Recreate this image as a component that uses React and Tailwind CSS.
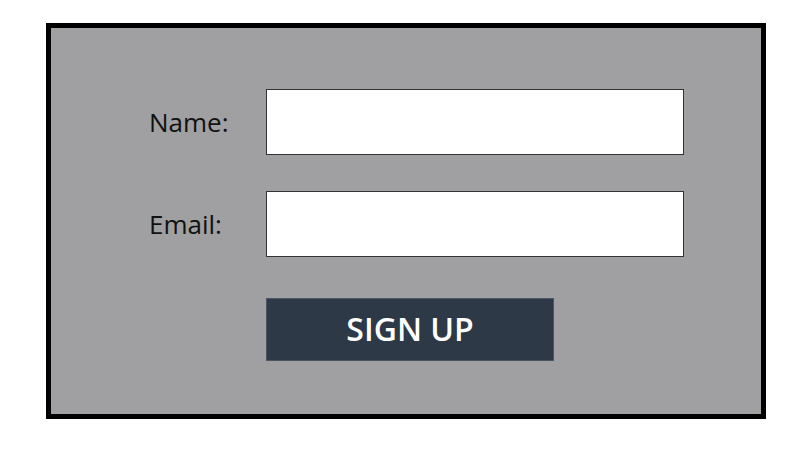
export default function App() {
  return (
    <div className="min-h-[451px] w-[801px] bg-white pl-[46px] pt-[23px]" style={{ fontFamily: '"Open Sans", "Noto Sans", sans-serif' }}>
      <div className="h-[396px] w-[720px] border-[5px] border-black bg-[#a0a0a3] pl-[98px] pt-[61px]">
        <div className="grid grid-cols-[117px_418px] items-center">
          <label className="text-[26px] leading-none text-[#111]">Name:</label>
          <input className="h-[66px] border-[1.5px] border-[#333] bg-white" />
          <label className="mt-[36px] text-[26px] leading-none text-[#111]">Email:</label>
          <input className="mt-[36px] h-[66px] border-[1.5px] border-[#333] bg-white" />
          <div />
          <button className="mt-[41px] flex h-[63px] w-[288px] items-center justify-center border border-[#4a5663] bg-[#2d3947] pb-[2px] text-[32px] font-semibold leading-none text-white">
            SIGN UP
          </button>
        </div>
      </div>
    </div>
  );
}
